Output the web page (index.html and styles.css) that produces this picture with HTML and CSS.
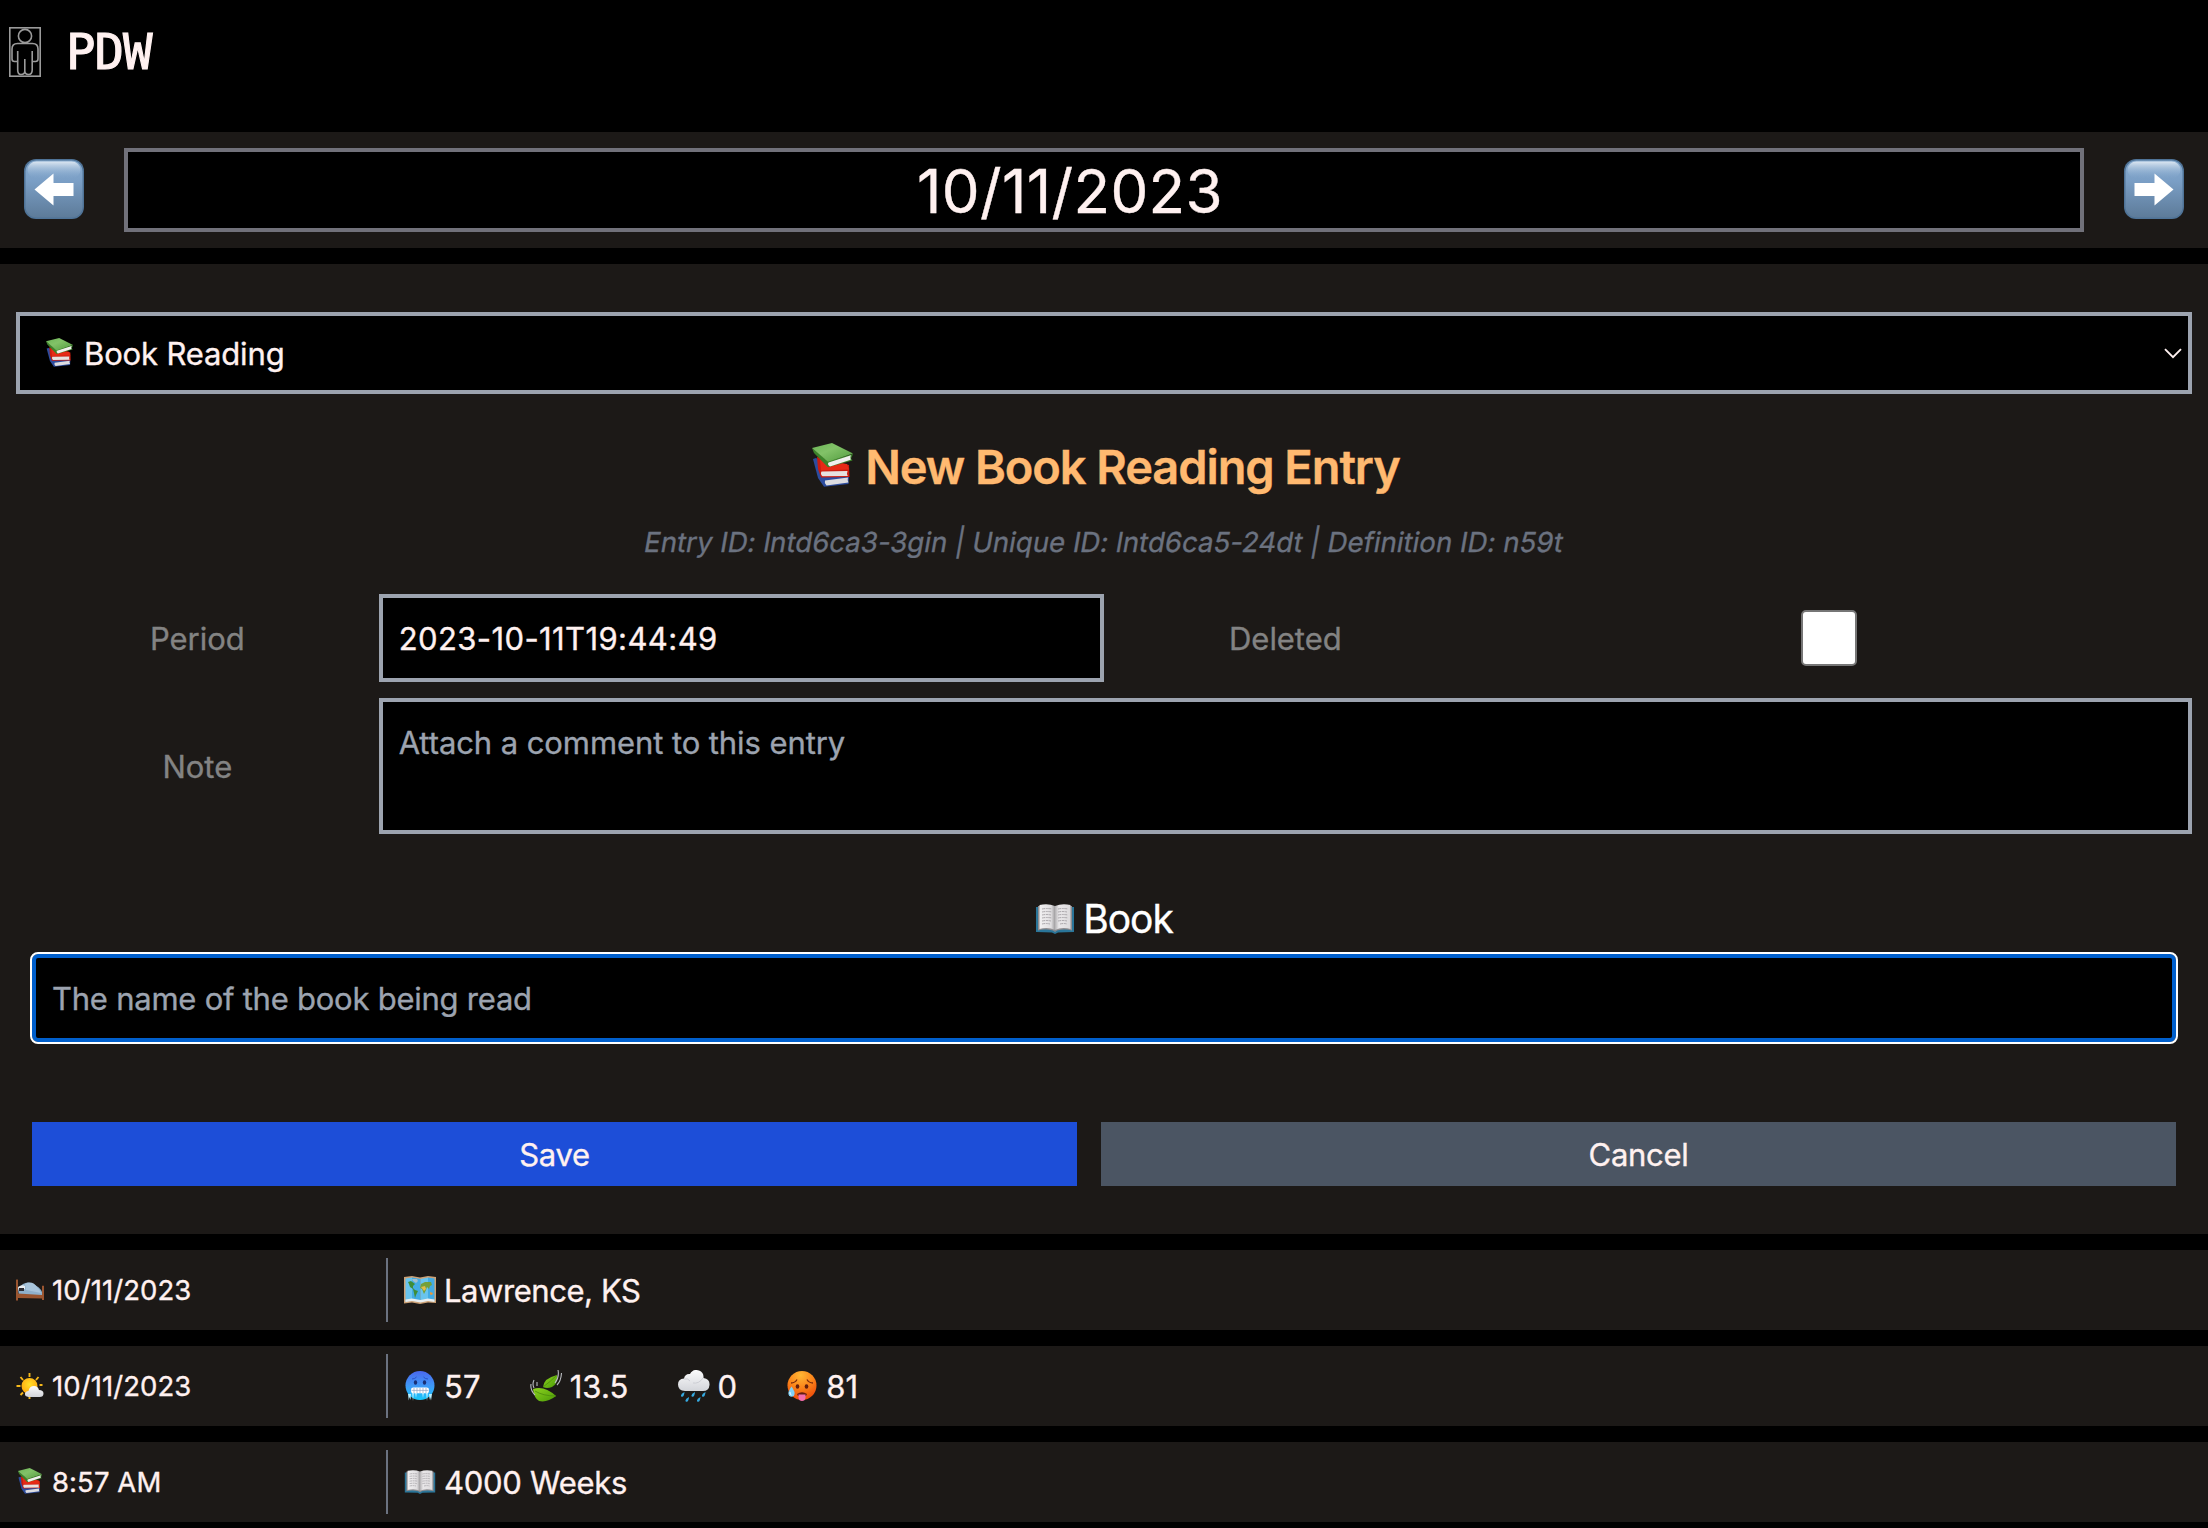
FILE: index.html
```html
<!DOCTYPE html>
<html lang="en">
<head>
<meta charset="utf-8">
<title>PDW</title>
<link rel="stylesheet" href="styles.css">
</head>
<body>
<svg class="defs" width="0" height="0" aria-hidden="true">
  <defs>
    <linearGradient id="key-face" x1="0" y1="0" x2="0" y2="1">
      <stop offset="0" stop-color="#86aace"/><stop offset=".35" stop-color="#7b9fc6"/><stop offset="1" stop-color="#5d7b99"/>
    </linearGradient>
    <linearGradient id="key-shine" x1="0" y1="0" x2="0" y2="1">
      <stop offset="0" stop-color="#dbe6f1"/><stop offset="1" stop-color="#86a9ce" stop-opacity="0"/>
    </linearGradient>
    <linearGradient id="green-cover" x1="0" y1="0" x2="1" y2="1">
      <stop offset="0" stop-color="#6cb556"/><stop offset=".4" stop-color="#82c268"/><stop offset="1" stop-color="#4f9a3c"/>
    </linearGradient>
    <linearGradient id="cold-skin" x1="0" y1="0" x2="0" y2="1">
      <stop offset="0" stop-color="#4a68ee"/><stop offset=".5" stop-color="#3f97f6"/><stop offset="1" stop-color="#16c8fb"/>
    </linearGradient>
    <radialGradient id="hot-skin" cx=".45" cy=".15" r=".9">
      <stop offset="0" stop-color="#ffb734"/><stop offset=".5" stop-color="#fb8219"/><stop offset="1" stop-color="#ea4208"/>
    </radialGradient>
    <linearGradient id="cloud-fill" x1="0" y1="0" x2="0" y2="1">
      <stop offset="0" stop-color="#fbfbfc"/><stop offset="1" stop-color="#d3d5da"/>
    </linearGradient>
    <linearGradient id="leaf-fill" x1="0" y1="0" x2="1" y2="1">
      <stop offset="0" stop-color="#8ed420"/><stop offset="1" stop-color="#4b9a06"/>
    </linearGradient>
    <radialGradient id="sun-fill" cx=".5" cy=".4" r=".6">
      <stop offset="0" stop-color="#ffdf2a"/><stop offset="1" stop-color="#ffa80e"/>
    </radialGradient>
    <linearGradient id="page-l" x1="0" x2="1"><stop offset="0" stop-color="#f2f1f2"/><stop offset=".75" stop-color="#e0dee0"/><stop offset="1" stop-color="#a09ea0"/></linearGradient>
    <linearGradient id="page-r" x1="0" x2="1"><stop offset="0" stop-color="#b3b1b3"/><stop offset=".25" stop-color="#e9e7e9"/><stop offset="1" stop-color="#dddbdd"/></linearGradient>
  </defs>
  <symbol id="books" viewBox="0 0 41 44">
    <path d="M1 16 4 15 37 34 36.500 41 12 43.700 6 35Z" fill="#2c4c9e"/>
    <path d="M13 37.500 36 34.500Q35 37.500 36.500 39.500L14.500 42.500Q12 40 13 37.500Z" fill="#dcdce0"/>
    <path d="M5 14 37 22 37.500 34 9 34.500 6 26Z" fill="#c81d10"/>
    <path d="M8 17 35 21 37 26.500 9 27.500Z" fill="#e62a16"/>
    <path d="M9.500 28.500 35.500 28Q34.500 30.500 35.800 33L10.500 33.300Q8 31 9.500 28.500Z" fill="#e6e2e0"/>
    <path d="M0 5 2 10 16 24.300 40.500 17.500 39 15.500 41 11 16 18Z" fill="#3c8229"/>
    <path d="M16.500 19.500 39 12.300Q37.500 14.500 38.700 16.700L18 23.500Q15 21.500 16.500 19.500Z" fill="#f0f0ee"/>
    <path d="M0 5 20 0 41 10.500 16 18.800Z" fill="url(#green-cover)"/>
  </symbol>
  <symbol id="book" viewBox="0 0 38 30">
    <path d="M0 3H38V28L22 28.500 19 30 16 28.500 0 28Z" fill="#2a7599"/>
    <path d="M2 2 17 2 19 28 17 26.500Q9 24.500 2 26.500Z" fill="#8f8d90"/>
    <path d="M36 2 21 2 19 28 21 26.500Q29 24.500 36 26.500Z" fill="#8f8d90"/>
    <path d="M3.500 1Q12-1 19 2V26Q12 22.500 3.500 25Z" fill="url(#page-l)"/>
    <path d="M34.500 1Q26-1 19 2V26Q26 22.500 34.500 25Z" fill="url(#page-r)"/>
    <g stroke="#a5a2a6" stroke-width=".9" fill="none" stroke-dasharray="3 .7 2 .6"><path d="M6 5q5-1 10 0M6 8q5-1 10 0M6 11q5-1 9 0M6 14q5-1 10 0M6 17q5-1 9 0M6 20q4-1 8 0M22 5q5-1 10 0M22 8q5-1 9 0M22 11q5-1 10 0M22 14q5-1 10 0M22 17q5-1 9 0M24 20q4-1 7 0"/></g>
  </symbol>
  <symbol id="bed" viewBox="0 0 28 22">
    <path d="M2 9 7 5Q12 2 17 5 24 8 26 13V17L3 18Z" fill="#8fb0cb"/>
    <path d="M9 5Q16 1 21 8 24 11 25 14L10 11Z" fill="#a8c4db"/>
    <path d="M2 8Q6 5 9 7L9 10 3 12Z" fill="#e9edf1"/>
    <path d="M3 9 8 9 8 12 3 12Z" fill="#2c2c33"/>
    <path d="M0 1Q1-.5 2 1V14.500L26 16V7Q27 6 28 7V21H26V19.500L2 19V21.500H0Z" fill="#9a5530"/>
  </symbol>
  <symbol id="sun-cloud" viewBox="0 0 27 27">
    <g stroke="#f5b81b" stroke-width="1.900"><path d="M13 0V4M4 4 6.500 7M22 4 19.500 7M0 13H4M23 12 26 12M4 22 6.500 19.500M13 23V26"/></g>
    <circle cx="13" cy="13" r="8" fill="url(#sun-fill)"/>
    <path d="M12 24Q8 23.500 8.500 20.500 9 18 12 18 13 13 17.500 13 21.500 13 22.500 17 27 17 27 20.500 27 24 23 24Z" fill="url(#cloud-fill)"/>
  </symbol>
  <symbol id="map" viewBox="0 0 32 28">
    <path d="M0 1 8 0 16 1.500 24 0 32 1V27L24 26.500 16 28 8 26.500 0 27.500Z" fill="#cda277"/>
    <path d="M1.500 2.500 8 1.500V24.500L1.500 25.500ZM16.500 3 24 1.500V24L16.500 25.500Z" fill="#69c4ee"/>
    <path d="M8 1.500 16.500 3V25.500L8 24.500ZM24 1.500 30.500 2.500V25L24 24Z" fill="#43ace4"/>
    <path d="M1.500 23.500 8 22.500 16.500 24 24 22.500 30.500 23.500V26L24 25 16.500 26.500 8 25 1.500 26Z" fill="#e8eef0"/>
    <path d="M4 6 7 5 11 8 9 10 9 12 11 14 14 15 12 19 11 22 10 17 9 13 6 11 5 8Z" fill="#3f8d36"/>
    <path d="M17 8 21 6 27 6 28 9 26 10 25 13 23 11 22 14 20 18 18 13 16 12Z" fill="#74a03a"/>
    <path d="M17 11 21 10 22 13 20 15Z" fill="#e2bd4a"/><path d="M26 16 29 17 28 19 26 18.500Z" fill="#e79a3e"/>
    <path d="M8 3 13 3 14 5 12 7 9 5Z" fill="#a3bfcb"/>
  </symbol>
  <symbol id="cold" viewBox="0 0 30 30">
    <circle cx="15" cy="14.500" r="14.500" fill="url(#cold-skin)"/>
    <ellipse cx="10.500" cy="11.500" rx="1.700" ry="2.300" fill="#183076"/><ellipse cx="19.500" cy="11.500" rx="1.700" ry="2.300" fill="#183076"/>
    <path d="M7 8Q10 8 11.500 6M18.500 6Q20 8 23 8" stroke="#2c50c8" stroke-width="1" fill="none"/>
    <path d="M3 23H6L5.500 29 4.500 26 3.800 29.500ZM24 23H27L26 29.500 25 26 24.500 29ZM7 21 9 21 8 30ZM10 21 12 21 11 27ZM17 21 19 21 18 27ZM21 21 23 21 22 30Z" fill="#b8efff"/>
    <rect x="6" y="16.500" width="18" height="5.800" rx="2.300" fill="#fff"/>
    <path d="M6.500 19.400H23.500M9 17V22M12 17V22M15 17V22M18 17V22M21 17V22" stroke="#8fa2c2" stroke-width=".7"/>
  </symbol>
  <symbol id="leaf" viewBox="0 0 32 32">
    <path d="M13 17Q14 8 27 5 28 14 22 17 17 19 13 17Z" fill="url(#leaf-fill)"/>
    <path d="M3 19Q14 15 26 26 17 33 9 31 4 28 3 19Z" fill="url(#leaf-fill)"/>
    <path d="M13 17Q20 12 27 5M5 21Q13 26 26 26" stroke="#4d8b0c" stroke-width=".8" fill="none"/>
    <path d="M28 0Q29.500 7 25 13M31.500 3Q31 11 27 15M1 14Q0 20 5 25M4 10Q2 14 4 18M7 12 7 16" stroke="#b9bcc0" stroke-width="1.100" fill="none"/>
  </symbol>
  <symbol id="rain" viewBox="0 0 32 32">
    <path d="M7 21Q0 20.500 0 14.500 0 9 6 8.500 7 3.500 12 4 15-1.500 21 .500 26 2.500 25.500 8 32 9 31.500 15 31 21 25 21Z" fill="url(#cloud-fill)"/>
    <path d="M6 9Q10 8 12 11M15 13Q21 14 25 8" stroke="#c9cbd1" stroke-width=".9" fill="none"/>
    <g fill="#35a9e0"><path d="M6.500 22Q2 24 3.200 26.500 6 28 6.500 22ZM17 22Q12.500 24 13.700 26.500 16.500 28 17 22ZM27.500 22Q23 24 24.200 26.500 27 28 27.500 22ZM11 27Q6.500 29 7.700 31.500 10.500 33 11 27ZM22.500 27Q18 29 19.200 31.500 22 33 22.500 27Z"/></g>
  </symbol>
  <symbol id="hot" viewBox="0 0 30 30">
    <circle cx="15" cy="14.500" r="14.500" fill="url(#hot-skin)"/>
    <ellipse cx="10.500" cy="15.500" rx="1.800" ry="2.200" fill="#641f0c"/><ellipse cx="19.500" cy="15.500" rx="1.800" ry="2.200" fill="#641f0c"/>
    <path d="M4 12Q8 12 10 8.500M20 8.500Q22 12 26 12" stroke="#7a2a0c" stroke-width="1.300" fill="none"/>
    <path d="M10 23Q15 19.500 20 23L19 25H11Z" fill="#651d10"/>
    <path d="M11.500 23.500H18.500V27Q18 30 15 30 12 30 11.500 27Z" fill="#f56cab"/>
    <path d="M4.500 15.500Q0 21.500 2 24.500 4.500 27 7 24.500 9 21.500 4.500 15.500Z" fill="#7fd0f6"/>
    <path d="M3 21Q2.500 23.500 4.500 24" stroke="#fff" stroke-width="1" fill="none"/>
  </symbol>
  <symbol id="arrow-key" viewBox="0 0 60 60">
    <rect width="60" height="60" rx="12" fill="#4f7397"/>
    <rect x="1.500" y="1.500" width="57" height="57" rx="11" fill="url(#key-face)"/>
    <rect x="3.500" y="2.500" width="53" height="17" rx="9" fill="url(#key-shine)"/>
    <path d="M10.500 30.500 29.500 14.500V24H49.500V37H29.500V46.500Z" fill="#fff"/>
  </symbol>
</svg>

<header class="topbar">
  <svg class="logo" viewBox="0 0 32 50" fill="none" stroke="#9b9b9b" stroke-width="1.600">
    <rect x=".8" y=".8" width="30.400" height="48.400"/>
    <circle cx="16" cy="9" r="6.600"/>
    <path d="M8.700 24V43Q8.700 47.500 12 47.500 15.800 47.500 15.800 44V32M15.800 44Q16 47.500 19.500 47.500 23.200 47.500 23.200 43V24M8.700 34.500H5.500Q3 34.500 3 32V22Q3 16.500 8.500 16.500H23.500Q29 16.500 29 22V32Q29 34.500 26.500 34.500H23.200"/>
  </svg>
  <h1 class="brand">PDW</h1>
</header>

<section class="datebar">
  <button class="step" aria-label="Previous day"><svg class="key"><use href="#arrow-key"/></svg></button>
  <div class="date">10/11/2023</div>
  <button class="step" aria-label="Next day"><svg class="key key-next"><use href="#arrow-key"/></svg></button>
</section>

<main class="entry">
  <div class="picker" role="combobox">
    <svg class="picker-icon"><use href="#books"/></svg>
    <span class="picker-label">Book Reading</span>
    <svg class="chevron" viewBox="0 0 18 11"><path d="M1 1.200 9 9.200 17 1.200" fill="none" stroke="#fff1f0" stroke-width="1.900"/></svg>
  </div>

  <h2 class="title"><svg class="title-icon"><use href="#books"/></svg><span class="title-text">New Book Reading Entry</span></h2>
  <p class="ids">Entry ID: lntd6ca3-3gin | Unique ID: lntd6ca5-24dt | Definition ID: n59t</p>

  <div class="fields">
    <label class="label">Period</label>
    <input class="field period" value="2023-10-11T19:44:49">
    <label class="label">Deleted</label>
    <div class="check-cell"><span class="check" role="checkbox"></span></div>
    <label class="label">Note</label>
    <textarea class="field note" placeholder="Attach a comment to this entry"></textarea>
  </div>

  <div class="point">
    <h3 class="point-title"><svg class="point-icon"><use href="#book"/></svg><span>Book</span></h3>
    <input class="point-input" placeholder="The name of the book being read">
  </div>

  <div class="actions">
    <button class="btn save">Save</button>
    <button class="btn cancel">Cancel</button>
  </div>
</main>

<section class="rows">
  <article class="row">
    <div class="when"><svg class="when-icon bed"><use href="#bed"/></svg><span>10/11/2023</span></div>
    <div class="values"><span class="value lawrence"><svg class="map"><use href="#map"/></svg><span>Lawrence, KS</span></span></div>
  </article>
  <article class="row">
    <div class="when"><svg class="when-icon sun"><use href="#sun-cloud"/></svg><span>10/11/2023</span></div>
    <div class="values">
      <span class="value"><svg class="face"><use href="#cold"/></svg><span>57</span></span>
      <span class="value"><svg><use href="#leaf"/></svg><span>13.5</span></span>
      <span class="value"><svg><use href="#rain"/></svg><span>0</span></span>
      <span class="value"><svg class="face"><use href="#hot"/></svg><span>81</span></span>
    </div>
  </article>
  <article class="row">
    <div class="when"><svg class="when-icon stack"><use href="#books"/></svg><span>8:57 AM</span></div>
    <div class="values"><span class="value weeks"><svg class="open"><use href="#book"/></svg><span>4000 Weeks</span></span></div>
  </article>
</section>
</body>
</html>
```
FILE: styles.css
```css
*, *::before, *::after { box-sizing: border-box; }

body {
  margin: 0;
  background: #000;
  color: #fff1f0;
  font: 400 31px/48px "Inter", "Noto Sans", sans-serif;
  -webkit-text-stroke: 0.35px currentColor;
}

h1, h2, h3, p { margin: 0; font-weight: 400; }
svg { display: block; flex: none; }
.defs { position: absolute; }
button, input, textarea {
  font: inherit;
  color: inherit;
  border: 0;
  padding: 0;
  margin: 0;
  border-radius: 0;
  -webkit-text-stroke: 0.35px currentColor;
}

.topbar {
  display: flex;
  align-items: center;
  height: 132px;
  padding: 0 9px 28px;
}
.logo { width: 32px; height: 50px; }
.brand {
  margin-left: 25px;
  padding-top: 2px;
  font: 400 49px/56px "DejaVu Sans Mono", monospace;
  letter-spacing: -1px;
  -webkit-text-stroke: 1.1px currentColor;
}

.datebar {
  display: flex;
  align-items: center;
  height: 116px;
  padding: 0 24px;
  gap: 40px;
  background: #1c1917;
}
.step { background: none; width: 60px; height: 60px; margin-bottom: 2px; }
.key { width: 60px; height: 60px; }
.key-next { transform: scaleX(-1); }
.date {
  flex: 1;
  height: 84px;
  border: 4px solid #71717a;
  background: #000;
  padding: 1px 68px 0 0;
  text-align: center;
  font-size: 60px;
  line-height: 76px;
  letter-spacing: 0.35px;
}

.entry {
  margin-top: 16px;
  padding: 48px 16px;
  background: #1c1917;
}
.picker {
  display: flex;
  align-items: center;
  height: 82px;
  padding: 0 6px 0 26px;
  border: 4px solid #9ca3af;
  background: #000;
}
.picker-icon { width: 27px; height: 29px; margin: 0 11px 2px 0; }
.picker-label { padding-top: 1px; letter-spacing: -0.15px; }
.chevron { width: 18px; height: 11px; margin-left: auto; }

.title {
  display: flex;
  align-items: center;
  justify-content: center;
  gap: 12px;
  margin-top: 40px;
  height: 64px;
  padding-left: 4px;
  color: #ffb970;
  font-size: 47px;
  font-weight: 600;
  letter-spacing: -1.1px;
}
.title-text { padding-top: 1px; }
.title-icon { width: 41px; height: 44px; margin-bottom: 2px; }
.ids {
  margin-top: 24px;
  height: 40px;
  text-align: center;
  color: #6b7280;
  font-size: 27.5px;
  line-height: 40px;
  letter-spacing: 0.07px;
  transform: skewX(-10deg);
}

.fields {
  display: grid;
  grid-template-columns: repeat(6, 1fr);
  grid-template-rows: 88px 136px;
  gap: 16px 0;
  align-items: center;
  margin-top: 32px;
}
.label { padding-top: 2px; text-align: center; color: #838383; letter-spacing: -0.05px; }
.field {
  width: 100%;
  height: 100%;
  border: 4px solid #9ca3af;
  background: #000;
  padding: 16px;
  resize: none;
  display: block;
}
.period { grid-column: span 2; letter-spacing: 0.4px; }
.note { grid-column: span 5; padding-top: 17px; letter-spacing: -0.08px; }
.check-cell { grid-column: span 2; display: flex; justify-content: center; }
.check { width: 56px; height: 56px; border: 2px solid #767676; border-radius: 5px; background: #fff; }
::placeholder { color: #9ca3af; opacity: 1; }

.point { padding: 0 16px; margin-top: 60px; }
.point-title {
  display: flex;
  align-items: center;
  justify-content: center;
  gap: 9px;
  height: 50px;
  padding-left: 1px;
  color: #fff;
  font-size: 39px;
  letter-spacing: -1px;
}
.point-icon { width: 38px; height: 30px; }
.point-input {
  display: block;
  width: 100%;
  height: 88px;
  margin-top: 10px;
  padding: 0 16px;
  background: #000;
  border: 4px solid #005fcc;
  border-radius: 6px;
  outline: 2px solid #fff;
  letter-spacing: -0.24px;
}

.actions {
  display: grid;
  grid-template-columns: 1045px 1fr;
  gap: 24px;
  padding: 0 16px;
  margin-top: 80px;
}
.btn { height: 64px; padding-top: 1px; line-height: 63px; letter-spacing: -0.3px; }
.save { background: #1d4ed8; }
.cancel { background: #4b5563; }

.row {
  display: grid;
  grid-template-columns: 386px 1fr;
  height: 80px;
  margin-top: 16px;
  padding: 8px 0;
  background: #1c1917;
}
.when {
  display: flex;
  align-items: center;
  padding-left: 16px;
  font-size: 27.5px;
  letter-spacing: 0.08px;
}
.when-icon { width: 28px; margin-right: 8px; }
.bed { height: 22px; }
.sun { height: 27px; }
.stack { height: 26px; margin-bottom: 2px; }
.values {
  display: flex;
  align-items: center;
  gap: 49px;
  padding-left: 16px;
  border-left: 2px solid #6b7280;
}
.value { display: flex; align-items: center; gap: 8px; letter-spacing: 0.12px; }
.value span { padding-top: 1px; }
.value svg { width: 32px; height: 32px; }
.value .face { height: 30px; }
.value .map { height: 28px; }
.value .open { height: 24px; }
.lawrence { letter-spacing: -0.44px; }
.weeks { letter-spacing: -0.28px; }
```
